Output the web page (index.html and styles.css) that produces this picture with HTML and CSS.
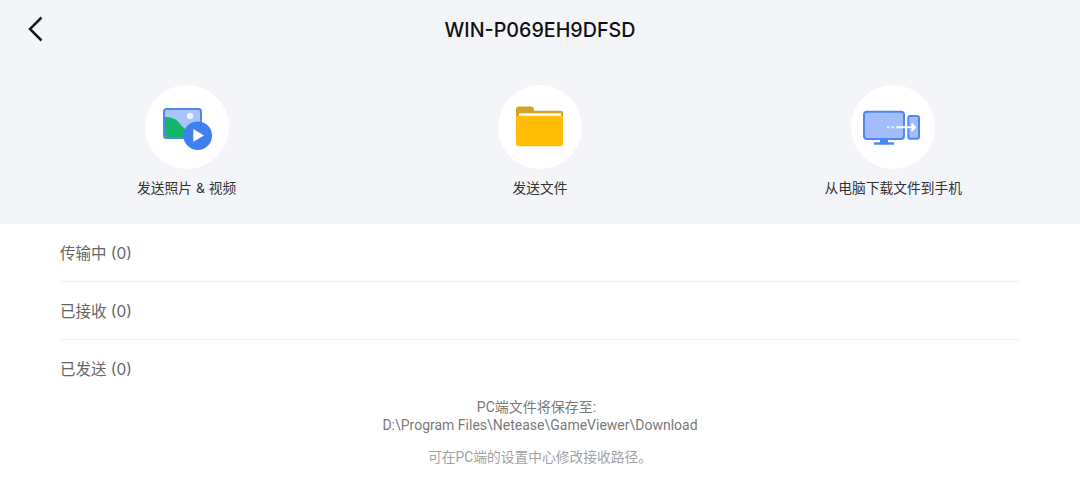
FILE: index.html
```html
<!DOCTYPE html>
<html lang="zh-CN">
<head>
<meta charset="utf-8">
<title>WIN-P069EH9DFSD</title>
<link rel="stylesheet" href="styles.css">
</head>
<body>
<header class="top">
  <div class="titlebar">
    <svg class="back" width="18" height="28" viewBox="0 0 18 28"><path d="M15.500 2.500 4 14l11.500 11.500" fill="none" stroke="#16181d" stroke-width="2.500"/></svg>
    <h1 class="title">WIN-P069EH9DFSD</h1>
  </div>
  <div class="actions">
    <div class="action">
      <svg class="circle" width="84" height="84" viewBox="0 0 84 84">
        <circle cx="42" cy="42" r="42" fill="#fff"/>
        <rect x="19" y="24" width="37" height="29" rx="2.500" fill="#a9c3fb" stroke="#4f86ef" stroke-width="2"/>
        <path d="M20 32c7 0 12 2 16 8 2.500 3 5 5 8 6v6H22a2 2 0 0 1-2-2z" fill="#12b76a"/>
        <circle cx="45" cy="31" r="3.200" fill="#e8f0ff"/>
        <circle cx="52.700" cy="50.700" r="14.300" fill="#3f7ff0"/>
        <path d="M48.300 44 59 50.400l-10.700 6.300z" fill="#fff"/>
      </svg>
      <span class="label">发送照片 &amp; 视频</span>
    </div>
    <div class="action">
      <svg class="circle" width="84" height="84" viewBox="0 0 84 84">
        <circle cx="42" cy="42" r="42" fill="#fff"/>
        <path d="M18 24a2.500 2.500 0 0 1 2.500-2.500H33a3 3 0 0 1 3 3v1.200h27a2 2 0 0 1 2 2V32H18z" fill="#d1a52c"/>
        <rect x="21" y="28.300" width="42" height="3" fill="#fff"/>
        <path d="M18 30.700h47V58a3.300 3.300 0 0 1-3.300 3.300H21.300A3.300 3.300 0 0 1 18 58z" fill="#ffbd05"/>
      </svg>
      <span class="label">发送文件</span>
    </div>
    <div class="action">
      <svg class="circle" width="84" height="84" viewBox="0 0 84 84">
        <circle cx="42" cy="42" r="42" fill="#fff"/>
        <rect x="13" y="26.700" width="40" height="27.300" rx="3" fill="#a3bcfb" stroke="#5087f2" stroke-width="2"/>
        <path d="M23 59.700v-1.400c0-.6.400-1 1-1h5V55h8v2.300h5c.6 0 1 .4 1 1v1.400z" fill="#4c85f3"/>
        <rect x="57.300" y="31" width="10.700" height="22.700" rx="2" fill="#a3bcfb" stroke="#5087f2" stroke-width="2"/>
        <path d="M36 42.300h2.500M40.500 42.300H43" stroke="#e6edff" stroke-width="2"/>
        <path d="M45.300 42.300H64M60.500 38.800l3.500 3.500-3.500 3.500" fill="none" stroke="#fff" stroke-width="2"/>
      </svg>
      <span class="label">从电脑下载文件到手机</span>
    </div>
  </div>
</header>
<main class="content">
  <div class="row">传输中 (0)</div>
  <div class="row">已接收 (0)</div>
  <div class="row row-last">已发送 (0)</div>
  <div class="path">
    <p>PC端文件将保存至:&nbsp;&nbsp;</p>
    <p>D:\Program Files\Netease\GameViewer\Download</p>
  </div>
  <p class="hint">可在PC端的设置中心修改接收路径。</p>
</main>
</body>
</html>
```

FILE: styles.css
```css
* { box-sizing: border-box; margin: 0; padding: 0; }
html, body { width: 1080px; height: 485px; overflow: hidden; background: #fff; }
body { font-family: Inter, "Noto Sans CJK SC", sans-serif; color: #666; }
.top { height: 224px; background: #f3f5f9; }
.titlebar { position: relative; height: 60px; display: flex; align-items: center; justify-content: center; }
.back { position: absolute; left: 26px; top: 15px; }
.title { font-size: 19.7px; font-weight: 500; color: #111; line-height: 28px; }
.actions { display: grid; grid-template-columns: repeat(3, 1fr); padding: 25px 10px 0; }
.action { display: flex; flex-direction: column; align-items: center; }
.circle { display: block; }
.label { margin-top: 9px; font-size: 13.75px; line-height: 20px; color: #333; }
.content { padding: 0 60px; }
.row { height: 58px; padding-bottom: 1px; display: flex; align-items: center; font-size: 15.5px; color: #666; border-bottom: 1px solid #f0f1f3; }
.row-last { height: 52px; border-bottom: 0; padding-top: 4px; }
.path { margin-top: 6px; font-family: Roboto, "Noto Sans CJK SC", sans-serif; text-align: center; font-size: 14px; line-height: 18px; color: #7a7a7a; }
.hint { margin-top: 14px; font-family: Roboto, "Noto Sans CJK SC", sans-serif; text-align: center; font-size: 13.75px; line-height: 18px; color: #a3a3a3; }
```
